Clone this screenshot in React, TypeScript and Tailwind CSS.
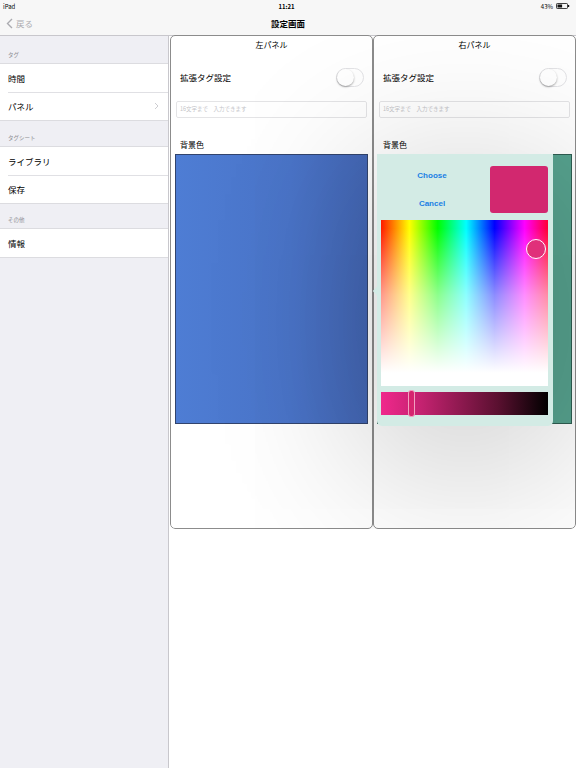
import React from 'react';

const jp = '"Noto Sans CJK JP", "Noto Sans", sans-serif';

function Battery() {
  return (
    <svg width="14" height="6" viewBox="0 0 14 6" className="ml-[3px]">
      <rect x="0.5" y="0.5" width="11" height="5" rx="0.8" fill="none" stroke="#111" strokeWidth="0.8" />
      <rect x="1.5" y="1.5" width="4.6" height="3" fill="#111" />
      <rect x="12" y="2" width="1.2" height="2" fill="#111" />
    </svg>
  );
}

function Toggle() {
  return (
    <div className="relative w-[28px] h-[19px] rounded-full bg-white border border-[#e3e3e6]">
      <div className="absolute left-[0px] top-[0px] w-[17px] h-[17px] rounded-full bg-white shadow-[0_1px_2px_rgba(0,0,0,0.35)]" />
    </div>
  );
}

function SideRow({ label, sep, chevron }: { label: string; sep?: boolean; chevron?: boolean }) {
  return (
    <div className="relative h-[28px] flex items-center pl-[8px] pr-[9px] text-[8.5px] text-black">
      {sep && <div className="absolute top-0 left-[8px] right-0 h-px bg-[#e0e0e4]" />}
      <span className="flex-1">{label}</span>
      {chevron && (
        <svg width="5" height="8" viewBox="0 0 5 8">
          <path d="M1 1 L4 4 L1 7" fill="none" stroke="#c7c7cc" strokeWidth="0.9" />
        </svg>
      )}
    </div>
  );
}

function SideHeader({ label, h }: { label: string; h: string }) {
  return (
    <div className={`${h} flex items-end pb-[4px] pl-[8px] text-[5.5px] text-[#8e8e93]`}>
      {label}
    </div>
  );
}

function PanelTop({ title }: { title: string }) {
  return (
    <>
      <div className="h-[18px] flex items-center justify-center text-[8px] text-black">{title}</div>
      <div className="mt-[14px] h-[19px] flex items-center pl-[9px] pr-[8px]">
        <span className="flex-1 text-[8.5px] text-black">拡張タグ設定</span>
        <Toggle />
      </div>
      <div className="mt-[14px] mx-[5px] h-[17px] rounded-[2px] border border-[#e4e4e6] bg-white flex items-center pl-[3px] text-[5.5px] text-[#c4c4c8]">
        16文字まで　入力できます
      </div>
      <div className="mt-[22px] h-[10px] leading-[10px] pl-[9px] text-[8px] text-black">背景色</div>
    </>
  );
}

function Picker() {
  return (
    <div className="absolute left-[-1px] top-[-1px] w-[176px] h-[272px] bg-[#d3ebe5] rounded-b-[5px] shadow-[0_30px_160px_20px_rgba(0,0,0,0.19)]">
      <div className="absolute left-[-3px] top-[134px] w-[6px] h-[6px] rotate-45 bg-[#d3ebe5]" />
      <div
        className="absolute left-[20px] top-[16px] w-[70px] text-center text-[8px] font-bold text-[#1a7fe4]"
        style={{ fontFamily: '"Liberation Sans", Arial, sans-serif' }}
      >
        Choose
      </div>
      <div
        className="absolute left-[20px] top-[44px] w-[70px] text-center text-[8px] font-bold text-[#1a7fe4]"
        style={{ fontFamily: '"Liberation Sans", Arial, sans-serif' }}
      >
        Cancel
      </div>
      <div className="absolute left-[113px] top-[12px] w-[58px] h-[47px] rounded-[3px] bg-[#d2286f]" />
      <div className="absolute left-[4px] top-[66px] w-[167px] h-[166px] bg-[linear-gradient(to_right,#ff1a00,#ffff00_17%,#00ff00_34%,#00ffff_51%,#0000ff_68%,#ff00ff_86%,#ff0033)]">
        <div className="absolute inset-0 bg-[linear-gradient(to_bottom,rgba(255,255,255,0)_5%,rgba(255,255,255,0.55)_45%,#fff_92%)]" />
        <div className="absolute left-[145px] top-[19px] w-[20px] h-[20px] rounded-full border border-white bg-[#e0307a]" />
      </div>
      <div className="absolute left-[4px] top-[238px] w-[167px] h-[23px] bg-[linear-gradient(to_right,#f0288c,#c2226f_25%,#5a1030_70%,#000)]">
        <div className="absolute left-[27px] top-[-2px] w-[7px] h-[27px] rounded-[3px] bg-[#d6246f] border border-[#f2a0c0]" />
      </div>
    </div>
  );
}

export default function App() {
  return (
    <div className="w-[576px] h-[768px] flex flex-col bg-white overflow-hidden" style={{ fontFamily: jp }}>
      {/* status + nav */}
      <div className="bg-[#f7f7f7] border-b border-[#c8c7cc]">
        <div className="h-[12px] flex items-center px-[3px] text-[6px] text-black">
          <span className="flex-1">iPad</span>
          <span className="font-semibold">11:21</span>
          <span className="flex-1 flex items-center justify-end pr-[3px]">
            43%
            <Battery />
          </span>
        </div>
        <div className="relative h-[23px] flex items-center">
          <div className="flex items-center pl-[6px] text-[8.5px] text-[#ababb0]">
            <svg width="7" height="11" viewBox="0 0 7 11" className="mr-[3px]">
              <path d="M6 1 L1.5 5.5 L6 10" fill="none" stroke="#ababb0" strokeWidth="1.4" />
            </svg>
            戻る
          </div>
          <div className="absolute inset-0 flex items-center justify-center text-[8.5px] font-bold text-black">
            設定画面
          </div>
        </div>
      </div>

      <div className="flex-1 flex min-h-0">
        {/* sidebar */}
        <div className="w-[169px] bg-[#efeff4] border-r border-[#c8c7cc]">
          <SideHeader label="タグ" h="h-[27px]" />
          <div className="bg-white border-y border-[#dcdce0]">
            <SideRow label="時間" />
            <SideRow label="パネル" sep chevron />
          </div>
          <SideHeader label="タグシート" h="h-[25px]" />
          <div className="bg-white border-y border-[#dcdce0]">
            <SideRow label="ライブラリ" />
            <SideRow label="保存" sep />
          </div>
          <SideHeader label="その他" h="h-[24px]" />
          <div className="bg-white border-y border-[#dcdce0]">
            <SideRow label="情報" />
          </div>
        </div>

        {/* panels */}
        <div className="flex-1 pl-[1px]">
          <div className="flex h-[494px] mt-[-1px] overflow-hidden rounded-b-[5px]">
            <div className="flex-1 rounded-[5px] border border-[#8c8c8c] bg-white flex flex-col">
              <PanelTop title="左パネル" />
              <div className="mt-[4px] ml-[4px] mr-[4px] h-[270px] border border-[#32446d] bg-[linear-gradient(to_right,#4e7dd4,#4a74c8_60%,#4467b5)]" />
            </div>
            <div className="flex-1 rounded-[5px] border border-[#8c8c8c] bg-white flex flex-col">
              <PanelTop title="右パネル" />
              <div className="relative mt-[4px] ml-[3px] mr-[3px] h-[270px] border border-[#2f5e52] bg-[#57a38f]">
                <Picker />
              </div>
            </div>
          </div>
        </div>
      </div>
    </div>
  );
}
